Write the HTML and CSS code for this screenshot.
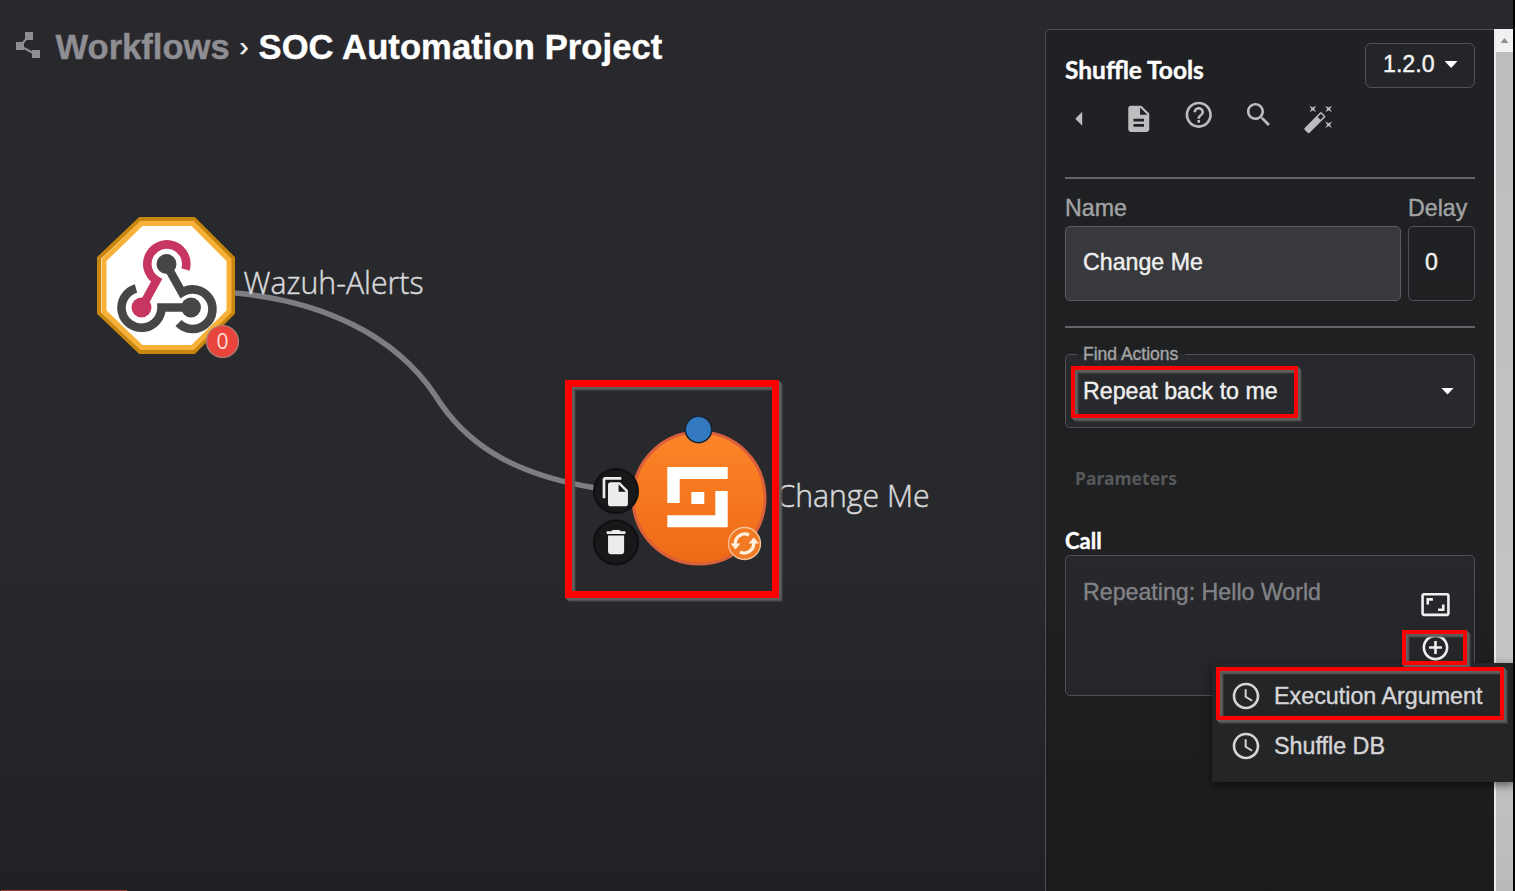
FILE: index.html
```html
<!DOCTYPE html>
<html lang="en">
<head>
<meta charset="utf-8">
<title>SOC Automation Project</title>
<link rel="stylesheet" href="styles.css">
</head>
<body>
<div class="app">
  <main class="canvas">
    <svg class="graph" viewBox="0 0 1045 891">
      <defs>
        <linearGradient id="orange" x1="0" y1="0" x2="0" y2="1">
          <stop offset="0" stop-color="#fd8528"/>
          <stop offset="1" stop-color="#ee6a16"/>
        </linearGradient>
      </defs>
      <path class="edge" d="M235 293C322 301 395 335 435 395C464 442 510 474 596 488"/>

      <!-- webhook trigger -->
      <path d="M140 219H194L233 258V313L194 352H140L99 313V258Z" fill="#fff" stroke="#c8860c" stroke-width="4"/>
      <path d="M141.500 223.500H192.500L229 260V311.500L192.500 347.500H141.500L104 311.500V260Z" fill="#fff" stroke="#f8b138" stroke-width="5"/>
      <g fill="none" stroke-width="8.600">
        <path stroke="#464646" d="M166 264L182 292.500A19.800 19.800 0 1 1 178.500 323"/>
        <path stroke="#464646" d="M136 288.500A20 20 0 1 0 161.500 307.500H191"/>
        <path stroke="#c73561" d="M185.500 269.500A19.500 19.500 0 1 0 156.500 280.500L142 307"/>
      </g>
      <circle cx="166.500" cy="264" r="10" fill="#464646"/>
      <circle cx="191" cy="307.500" r="10" fill="#464646"/>
      <circle cx="141.500" cy="307.500" r="10" fill="#c73561"/>
      <circle cx="222.500" cy="341.500" r="16" fill="#e9453c" stroke="#a8847f" stroke-width="1.200"/>
      <text class="badge-text" x="216.500" y="348.500" textLength="12" lengthAdjust="spacingAndGlyphs">0</text>
      <text class="node-label" x="243.500" y="294" textLength="180" lengthAdjust="spacingAndGlyphs">Wazuh-Alerts</text>

      <!-- action node -->
      <circle cx="699" cy="498" r="66" fill="url(#orange)" stroke="#d9603b" stroke-width="3"/>
      <path fill="#fff" d="M667.300 467H727.700V479H679.700V503H667.300ZM727.700 491V527.300H667.300V515.300H715.300V491ZM691.300 492H704.300V504H691.300Z"/>
      <circle cx="698.500" cy="429.500" r="13.200" fill="#3279bf" stroke="#172234" stroke-width="1.500"/>
      <circle cx="616" cy="491" r="22" fill="#17181a" stroke="#0e0f10" stroke-width="2"/>
      <circle cx="616" cy="542.500" r="22" fill="#17181a" stroke="#0e0f10" stroke-width="2"/>
      <path class="node-icon" transform="translate(600 475.700) scale(1.330)" d="M16 1H4c-1.100 0-2 .9-2 2v14h2V3h12V1zm-1 4l6 6v10c0 1.100-.9 2-2 2H7.990C6.890 23 6 22.100 6 21l.01-14c0-1.100.89-2 1.990-2h7zm-1 7h5.500L14 6.500V12z"/>
      <path class="node-icon" transform="translate(600 526) scale(1.340)" d="M6 19c0 1.100.9 2 2 2h8c1.100 0 2-.9 2-2V7H6v12zM19 4h-3.500l-1-1h-5l-1 1H5v2h14V4z"/>
      <circle cx="744.500" cy="543.500" r="16" fill="#f27a24" stroke="#f3c59c" stroke-width="1.300"/>
      <g fill="none" stroke="#fff1dd" stroke-width="3.300">
        <path d="M735.300 544A9.500 9.500 0 0 1 749 535"/>
        <path d="M753.700 543A9.500 9.500 0 0 1 740 552"/>
      </g>
      <path fill="#fff1dd" d="M730.500 543.500H740.500L735.500 549.500ZM748.500 543.500H759L753.700 537.500Z"/>
      <text class="node-label" x="776.500" y="507" textLength="153" lengthAdjust="spacingAndGlyphs">Change Me</text>
    </svg>
    <header class="crumbs">
      <svg class="crumb-icon" viewBox="0 0 24 26">
        <path d="M13 4L4 14L19 22" fill="none" stroke="#8e8e93" stroke-width="2"/>
        <path d="M9 0H17V8H9ZM0 10H8V18H0ZM16 18H24V26H16Z" fill="#8e8e93"/>
      </svg>
      <span class="crumb-parent">Workflows</span>
      <span class="crumb-sep">›</span>
      <h1 class="crumb-title">SOC Automation Project</h1>
    </header>
    <div class="run-bar"></div>
  </main>

  <aside class="panel">
    <div class="panel-head">
      <h2 class="tool-name">Shuffle Tools</h2>
      <button class="version">1.2.0<i class="caret"></i></button>
    </div>
    <div class="tools">
      <svg class="tool back" viewBox="0 0 32 32"><path d="M19.500 9V23L12.500 16Z"/></svg>
      <svg class="tool low" viewBox="0 0 24 24"><path d="M14 2H6c-1.100 0-1.990.9-1.990 2L4 20c0 1.100.89 2 1.990 2H18c1.100 0 2-.9 2-2V8l-6-6zm2 16H8v-2h8v2zm0-4H8v-2h8v2zm-3-5V3.500L18.500 9H13z"/></svg>
      <svg class="tool" viewBox="0 0 24 24"><path d="M11 18h2v-2h-2v2zm1-16C6.480 2 2 6.480 2 12s4.480 10 10 10 10-4.480 10-10S17.520 2 12 2zm0 18c-4.410 0-8-3.590-8-8s3.590-8 8-8 8 3.590 8 8-3.590 8-8 8zm0-14c-2.210 0-4 1.790-4 4h2c0-1.100.9-2 2-2s2 .9 2 2c0 2-3 1.750-3 5h2c0-2.250 3-2.500 3-5 0-2.210-1.790-4-4-4z"/></svg>
      <svg class="tool" viewBox="0 0 24 24"><path d="M15.500 14h-.79l-.28-.27C15.410 12.590 16 11.110 16 9.500 16 5.910 13.090 3 9.500 3S3 5.910 3 9.500 5.910 16 9.500 16c1.610 0 3.090-.59 4.230-1.570l.27.28v.79l5 4.990L20.490 19l-4.990-5zm-6 0C7.010 14 5 11.990 5 9.500S7.010 5 9.500 5 14 7.010 14 9.500 11.990 14 9.500 14z"/></svg>
      <svg class="tool low" viewBox="0 0 24 24"><path d="M7.500 5.600L10 7 8.600 4.500 10 2 7.500 3.400 5 2l1.400 2.500L5 7zm12 9.800L17 14l1.400 2.500L17 19l2.500-1.400L22 19l-1.400-2.500L22 14zM22 2l-2.500 1.400L17 2l1.400 2.500L17 7l2.500-1.400L22 7l-1.400-2.500zm-7.630 5.290c-.39-.39-1.020-.39-1.410 0L1.290 18.960c-.39.39-.39 1.020 0 1.410l2.340 2.340c.39.39 1.020.39 1.410 0L16.700 11.050c.39-.39.39-1.020 0-1.410l-2.330-2.350zm-1.030 5.490l-2.120-2.120 2.440-2.440 2.120 2.120-2.440 2.440z"/></svg>
    </div>
    <hr class="rule">
    <div class="fields">
      <label class="label">Name</label>
      <label class="label">Delay</label>
      <div class="input filled">Change Me</div>
      <div class="input">0</div>
    </div>
    <hr class="rule">
    <div class="select">
      <span class="select-label">Find Actions</span>
      <span>Repeat back to me</span>
      <i class="caret"></i>
    </div>
    <div class="section">Parameters</div>
    <div class="param-name">Call</div>
    <div class="textarea">
      <span class="placeholder">Repeating: Hello World</span>
      <div class="area-icons">
        <svg class="area-icon" viewBox="0 0 24 24"><path d="M19 12h-2v3h-3v2h5v-5zM7 9h3V7H5v5h2V9zm14-6H3c-1.100 0-2 .9-2 2v14c0 1.100.9 2 2 2h18c1.100 0 2-.9 2-2V5c0-1.100-.9-2-2-2zm0 16.010H3V4.990h18v14.020z"/></svg>
        <svg class="area-icon" viewBox="0 0 24 24"><path d="M13 7h-2v4H7v2h4v4h2v-4h4v-2h-4V7zm-1-5C6.480 2 2 6.480 2 12s4.480 10 10 10 10-4.480 10-10S17.520 2 12 2zm0 18c-4.410 0-8-3.590-8-8s3.590-8 8-8 8 3.590 8 8-3.590 8-8 8z"/></svg>
      </div>
    </div>
  </aside>

  <div class="scrollbar">
    <div class="scroll-up"><i></i></div>
    <div class="thumb"></div>
  </div>

  <div class="menu">
    <div class="menu-item">
      <svg class="menu-icon" viewBox="0 0 24 24"><path d="M11.990 2C6.470 2 2 6.480 2 12s4.470 10 9.990 10C17.520 22 22 17.520 22 12S17.520 2 11.990 2zM12 20c-4.420 0-8-3.580-8-8s3.580-8 8-8 8 3.580 8 8-3.580 8-8 8zm.5-13H11v6l5.250 3.150.75-1.230-4.500-2.670z"/></svg>
      <span>Execution Argument</span>
    </div>
    <div class="menu-item">
      <svg class="menu-icon" viewBox="0 0 24 24"><path d="M11.990 2C6.470 2 2 6.480 2 12s4.470 10 9.990 10C17.520 22 22 17.520 22 12S17.520 2 11.990 2zM12 20c-4.420 0-8-3.580-8-8s3.580-8 8-8 8 3.580 8 8-3.580 8-8 8zm.5-13H11v6l5.250 3.150.75-1.230-4.500-2.670z"/></svg>
      <span>Shuffle DB</span>
    </div>
  </div>

  <div class="mark mark-node"></div>
  <div class="mark mark-action"></div>
  <div class="mark mark-add"></div>
  <div class="mark mark-argument"></div>
</div>
</body>
</html>
```
FILE: styles.css
```css
* { box-sizing: border-box; }
body { margin: 0; background: #000; font-family: "Liberation Sans", Arial, sans-serif; }
.app {
  position: relative;
  display: grid;
  grid-template-columns: 1045px 449px 19px;
  width: 1513px;
  height: 891px;
  overflow: hidden;
  background: linear-gradient(#29292d, #28292c 60%, #202125);
}

/* canvas */
.canvas { position: relative; height: 891px; }
.graph { position: absolute; inset: 0; width: 1045px; height: 891px; }
.edge { fill: none; stroke: #7d7e83; stroke-width: 5.5; }
.node-icon { fill: #ececee; }
.node-label { font-family: "Open Sans", "Noto Sans", sans-serif; font-size: 30.5px; font-weight: 300; fill: #d8d8da; stroke: #d8d8da; stroke-width: .5px; }
.badge-text { font-family: "Open Sans", sans-serif; font-size: 22px; fill: #ffdcd4; }
.crumbs { position: relative; display: flex; align-items: center; height: 94px; padding-left: 16px; }
.crumb-icon { width: 24px; height: 26px; margin: -5px 16px 0 0; }
.crumb-parent, .crumb-title { font-size: 34.6px; font-weight: 700; line-height: 40px; white-space: nowrap; -webkit-text-stroke: .4px; }
.crumb-parent { width: 184px; margin-left: -.5px; color: #8e8e93; }
.crumb-sep { width: 19px; color: #eee; font-size: 27px; -webkit-text-stroke: .5px; }
.crumb-title { margin: 0; color: #fff; letter-spacing: .08px; }
.run-bar { position: absolute; left: 1px; bottom: 0; width: 126px; height: 1px; background: #9a3f2e; }

/* side panel */
.panel {
  height: 862px;
  margin-top: 29px;
  padding: 0 19px;
  border: solid #4d4e52;
  border-width: 1px 0 0 1px;
  border-radius: 5px 0 0 0;
  background: linear-gradient(#202124, #1f2021 65%, #1a1b1d);
  color: #f0f0f0;
  font-size: 23.2px;
  -webkit-text-stroke: .4px;
}
.panel-head { display: flex; justify-content: space-between; height: 60px; padding-top: 13px; }
.tool-name { margin: 9px 0 0; color: #fff; font-family: Lato, sans-serif; font-size: 24.5px; font-weight: 700; line-height: 36px; letter-spacing: 0; font-variant-ligatures: common-ligatures; }
.version {
  display: flex;
  align-items: center;
  gap: 10px;
  width: 110px;
  height: 45px;
  padding: 0 0 2px 17px;
  border: 1.500px solid #505155;
  border-radius: 6px;
  background: #242528;
  color: #f4f4f4;
  font: 23.2px "Liberation Sans", sans-serif;
  -webkit-text-stroke: .4px;
}
.caret { width: 13px; height: 7px; background: #fff; clip-path: polygon(0 0, 100% 0, 50% 100%); }
.tools { display: flex; gap: 28px; height: 87px; padding-top: 9px; }
.tool { flex: none; position: relative; left: -.7px; width: 31.5px; height: 31.5px; margin-right: .5px; fill: #bdbdbf; }
.tool.back { margin-left: -1px; margin-top: 4px; }
.tool.low { margin-top: 4px; }
.rule { height: 2px; margin: 0; border: 0; background: #646568; }
.fields { display: grid; grid-template: 47px 75px / 336px 67px; column-gap: 7px; height: 147px; }
.label { padding-top: 15px; color: #a2a3a5; line-height: 28px; }
.input { display: flex; align-items: center; padding-left: 16px; padding-bottom: 2px; border: 1.500px solid #505154; border-radius: 5px; }
.filled { border-color: #5b5c60; background: #38393c; padding-left: 17px; }
.select {
  position: relative;
  display: flex;
  align-items: center;
  justify-content: space-between;
  height: 74px;
  margin-top: 26px;
  padding: 0 20px 0 17px;
  border: 1.500px solid #4f5054;
  border-radius: 5px;
  background: #28292c;
}
.select-label { position: absolute; left: 11px; top: -12px; padding: 0 7px 0 6px; background: linear-gradient(#1f2022 50%, #28292c 50%); color: #a2a3a5; font-size: 17.500px; line-height: 22px; }
.section { height: 101px; padding: 37px 0 0 10px; color: #58595b; font: 700 17.500px/26px "Noto Sans", sans-serif; letter-spacing: .05px; -webkit-text-stroke: 0; }
.param-name { height: 26px; color: #fff; font: 700 22px/23px Lato, sans-serif; }
.textarea { display: flex; justify-content: space-between; height: 141px; padding: 21px 23px 0 17px; border: 1.500px solid #4f5054; border-radius: 5px; background: linear-gradient(#28282c, #252629); }
.placeholder { color: #818286; line-height: 30px; }
.area-icons { display: flex; flex-direction: column; gap: 12px; padding-top: 12px; }
.area-icon { width: 31px; height: 31px; fill: #f0f0f0; }

/* scrollbar */
.scrollbar { height: 862px; margin-top: 29px; border-left: 2px solid #ececec; background: #c2c2c4; }
.scroll-up { display: grid; place-items: center; height: 23px; background: #f1f1f1; }
.scroll-up i { width: 8px; height: 5px; background: #909090; clip-path: polygon(50% 0, 100% 100%, 0 100%); }
.thumb { height: 839px; background: linear-gradient(#bdbdbf, #c5c5c6 80%, #bababc); }

/* variable menu */
.menu { position: absolute; left: 1212px; top: 663px; width: 303px; height: 119px; padding: 8px 0 0 18px; background: #242527; box-shadow: 0 3px 9px rgba(0, 0, 0, .55); }
.menu-item { display: flex; align-items: center; gap: 12px; height: 50px; color: #d5d5d7; font-size: 23.300px; white-space: nowrap; -webkit-text-stroke: .4px; }
.menu-item span { padding-top: 1px; }
.menu-icon { width: 32px; height: 32px; fill: #d5d5d7; }

/* highlight boxes */
.mark {
  position: absolute;
  border: 4px solid #f00;
  filter: drop-shadow(1px 1px 0 rgba(100, 100, 100, .75)) drop-shadow(1px 1px 0 rgba(95, 95, 95, .75)) drop-shadow(1px 1px 0 rgba(90, 90, 90, .75)) drop-shadow(1px 1px 0 rgba(90, 90, 90, .8));
}
.mark-node { left: 565px; top: 380px; width: 214px; height: 218px; border-width: 7px; }
.mark-action { left: 1071px; top: 366px; width: 227px; height: 52px; }
.mark-add { left: 1402px; top: 630px; width: 65px; height: 35px; }
.mark-argument { left: 1216px; top: 667px; width: 288px; height: 53px; }
```
